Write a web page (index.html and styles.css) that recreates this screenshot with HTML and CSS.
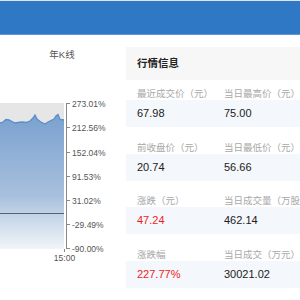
FILE: index.html
```html
<!DOCTYPE html>
<html lang="zh-CN">
<head>
  <meta charset="UTF-8">
  <title>行情信息</title>
  <meta name="viewport" content="width=device-width, initial-scale=1.0">
  <link rel="stylesheet" href="styles.css">
</head>
<body>
  <div class="topbar"></div>
  <div class="main">
    <div class="chart-col">
      <div class="chart-title">年K线</div>
      <svg class="chart" width="126" height="205" viewBox="0 0 126 205">
        <defs>
          <linearGradient id="areaFill" x1="0" y1="0" x2="0" y2="1">
            <stop offset="0" stop-color="#7aa1cf"/>
            <stop offset="0.6" stop-color="#a7c0dd"/>
            <stop offset="1" stop-color="#f2f5f9"/>
          </linearGradient>
        </defs>
        <!-- plot background -->
        <rect x="0" y="40" width="64" height="146" fill="#e6e6e6"/>
        <!-- area -->
        <path d="M0 60 L3 59 L6 56.5 L9 57 L12 58.5 L15 60 L18 59.5 L22 59 L26 59.5 L30 58 L33 55 L35 52 L37 56 L40 58.5 L43 60 L45 61 L48 59 L51 57.5 L54 56 L56 53 L58 51.5 L60 56.5 L64 57 L64 186 L0 186 Z" fill="url(#areaFill)"/>
        <path d="M0 60 L3 59 L6 56.5 L9 57 L12 58.5 L15 60 L18 59.5 L22 59 L26 59.5 L30 58 L33 55 L35 52 L37 56 L40 58.5 L43 60 L45 61 L48 59 L51 57.5 L54 56 L56 53 L58 51.5 L60 56.5 L64 57" fill="none" stroke="#5b8dc9" stroke-width="1.3"/>
        <!-- zero line -->
        <line x1="0" y1="150.5" x2="64" y2="150.5" stroke="#5a6370" stroke-width="1"/>
        <!-- axis -->
        <line x1="66.5" y1="40" x2="66.5" y2="186" stroke="#888" stroke-width="1"/>
        <g stroke="#888" stroke-width="1">
          <line x1="66.5" y1="40.5" x2="70" y2="40.5"/>
          <line x1="66.5" y1="64.5" x2="70" y2="64.5"/>
          <line x1="66.5" y1="89.5" x2="70" y2="89.5"/>
          <line x1="66.5" y1="113.5" x2="70" y2="113.5"/>
          <line x1="66.5" y1="137.5" x2="70" y2="137.5"/>
          <line x1="66.5" y1="161.5" x2="70" y2="161.5"/>
          <line x1="66.5" y1="185.5" x2="70" y2="185.5"/>
          <line x1="64.5" y1="186" x2="64.5" y2="189"/>
        </g>
        <g class="axis-label">
          <text x="72" y="43.5">273.01%</text>
          <text x="72" y="67.5">212.56%</text>
          <text x="72" y="92.5">152.04%</text>
          <text x="72" y="116.5">91.53%</text>
          <text x="72" y="140.5">31.02%</text>
          <text x="72" y="164.5">-29.49%</text>
          <text x="72" y="188.5">-90.00%</text>
          <text x="64.5" y="198" text-anchor="middle">15:00</text>
        </g>
      </svg>
    </div>

    <div class="quote">
      <div class="quote-head">行情信息</div>
      <div class="quote-list">
        <div class="item">
          <div class="label-row"><span>最近成交价（元）</span><span>当日最高价（元）</span></div>
          <div class="value-row"><span>67.98</span><span>75.00</span></div>
        </div>
        <div class="item">
          <div class="label-row"><span>前收盘价（元）</span><span>当日最低价（元）</span></div>
          <div class="value-row"><span>20.74</span><span>56.66</span></div>
        </div>
        <div class="item">
          <div class="label-row"><span>涨跌（元）</span><span>当日成交量（万股）</span></div>
          <div class="value-row"><span class="up">47.24</span><span>462.14</span></div>
        </div>
        <div class="item">
          <div class="label-row"><span>涨跌幅</span><span>当日成交（万元）</span></div>
          <div class="value-row"><span class="up">227.77%</span><span>30021.02</span></div>
        </div>
      </div>
    </div>
  </div>
</body>
</html>
```

FILE: styles.css
```css
:root {
  --blue: #2f78c5;
  --label: #a8a8a8;
  --text: #222;
  --red: #f01c1c;
  --head-bg: #f7f7f7;
  --row-bg: #f4f7fb;
}
html, body {
  overflow: hidden;
}
body {
  margin: 0;
  padding: 0;
  background: #fff;
  font-family: "Liberation Sans", "Noto Sans CJK SC", sans-serif;
  color: var(--text);
}
/* top blue strip */
.topbar {
  height: 33px;
  background: var(--blue);
  border-top: 1px solid #dde5ee;
  border-bottom: 1px solid #5c98d6;
}
.main {
  display: flex;
  padding-top: 12px;
}
/* chart column */
.chart-col {
  flex: none;
  width: 126px;
}
.chart-title {
  width: 124px;
  text-align: center;
  font-size: 9.5px;
  line-height: 16px;
  color: #555;
}
.chart {
  display: block;
}
.axis-label text {
  font-family: "Liberation Sans", sans-serif;
  font-size: 8.5px;
  fill: #555;
}
/* quote panel */
.quote {
  flex: none;
  width: 190px;
}
.quote-head {
  height: 33px;
  line-height: 33px;
  padding-left: 11px;
  background: var(--head-bg);
  font-size: 10.5px;
  font-weight: bold;
  color: #222;
}
.quote-list {
  padding-top: 8px;
}
.item {
  margin-bottom: 14.5px;
}
.label-row, .value-row {
  display: flex;
  white-space: nowrap;
}
.label-row span, .value-row span {
  flex: none;
  width: 87px;
  padding-left: 11px;
  box-sizing: border-box;
}
.label-row {
  line-height: 12px;
  font-size: 9.5px;
  color: var(--label);
}
.value-row {
  height: 27px;
  line-height: 27px;
  font-size: 11px;
  background: var(--row-bg);
  color: var(--text);
}
.value-row .up {
  color: var(--red);
}
```
